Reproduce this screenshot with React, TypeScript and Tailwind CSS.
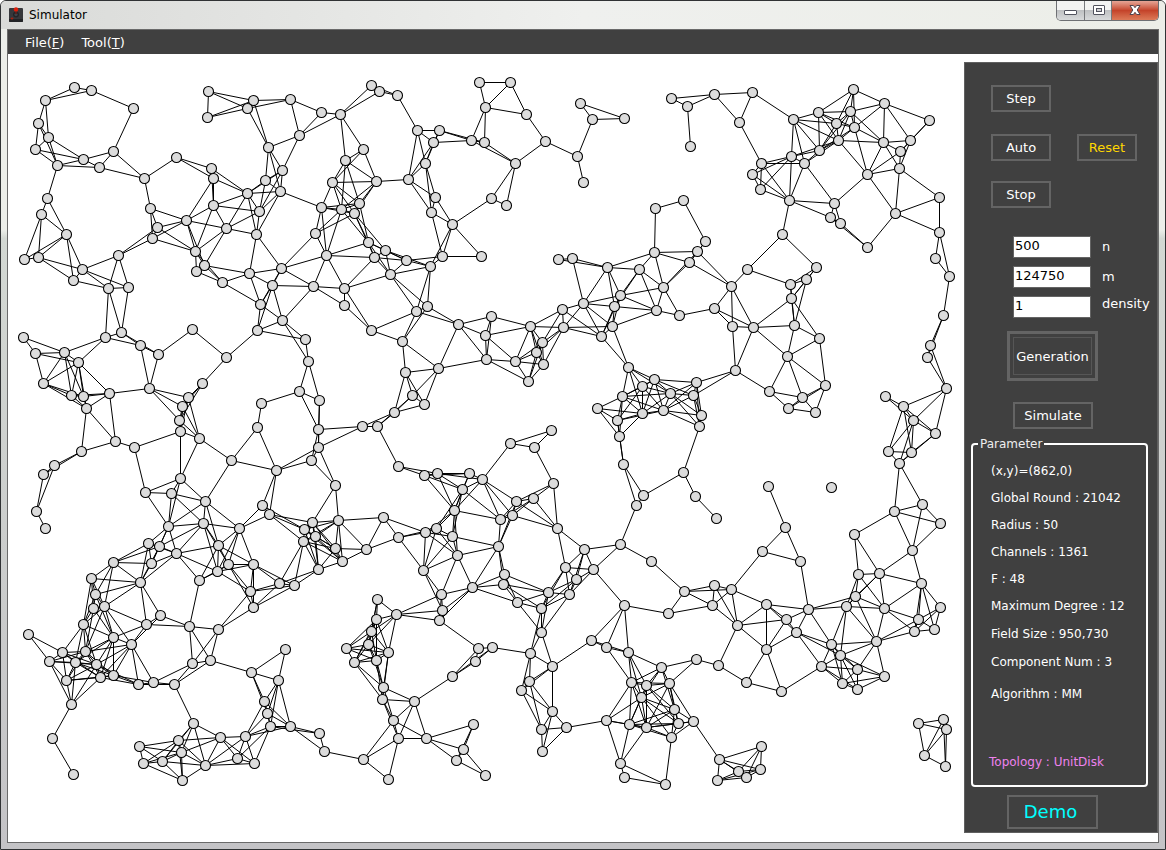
import React from "react";

const RADIUS = 50;

const NODES: [number, number][] = [
  [74, 87], [91, 90], [45, 100], [133, 108], [38, 123], [48, 137], [35, 149], [57, 165], [83, 159], [99, 167],
  [113, 151], [144, 178], [176, 157], [211, 168], [213, 178], [47, 198], [41, 214], [66, 234], [24, 259], [38, 257],
  [118, 255], [82, 269], [73, 280], [108, 288], [128, 287], [150, 208], [157, 227], [152, 238], [186, 220], [213, 205],
  [226, 228], [195, 251], [204, 265], [196, 271], [222, 282], [208, 91], [207, 117], [253, 100], [247, 108], [290, 99],
  [268, 147], [299, 135], [282, 170], [265, 180], [280, 191], [247, 193], [259, 211], [256, 234], [249, 273], [281, 268],
  [272, 285], [260, 304], [313, 286], [315, 233], [371, 85], [379, 91], [397, 95], [340, 114], [321, 112], [417, 130],
  [439, 130], [433, 142], [471, 140], [484, 142], [485, 107], [479, 82], [510, 82], [526, 114], [545, 141], [580, 103],
  [592, 119], [624, 118], [577, 156], [583, 182], [515, 163], [491, 198], [506, 205], [363, 149], [345, 160], [332, 182],
  [376, 181], [408, 179], [425, 163], [435, 197], [431, 212], [452, 224], [359, 203], [354, 213], [341, 209], [321, 207],
  [368, 242], [385, 250], [374, 257], [406, 260], [390, 274], [430, 266], [442, 256], [481, 256], [326, 255], [344, 288],
  [344, 305], [416, 311], [427, 306], [558, 259], [572, 258], [607, 267], [639, 269], [620, 295], [583, 303], [614, 306],
  [562, 309], [671, 98], [687, 106], [714, 94], [752, 92], [739, 122], [690, 146], [793, 119], [818, 112], [853, 89],
  [850, 111], [836, 123], [854, 127], [838, 140], [819, 150], [884, 103], [929, 120], [883, 142], [910, 140], [900, 151],
  [899, 168], [867, 174], [791, 156], [804, 163], [761, 163], [752, 174], [760, 189], [789, 200], [834, 203], [830, 217],
  [840, 223], [867, 247], [895, 213], [939, 197], [939, 232], [935, 258], [949, 276], [782, 234], [816, 267], [806, 279],
  [790, 284], [791, 298], [747, 269], [731, 286], [714, 308], [655, 208], [683, 200], [705, 241], [697, 251], [689, 262],
  [654, 252], [663, 287], [656, 310], [23, 337], [35, 353], [64, 352], [78, 362], [43, 383], [71, 395], [83, 396],
  [86, 408], [109, 393], [105, 337], [121, 332], [140, 345], [158, 354], [192, 329], [226, 357], [149, 388], [202, 383],
  [188, 397], [182, 406], [179, 420], [180, 431], [199, 438], [115, 441], [134, 447], [81, 451], [54, 465], [43, 474],
  [36, 511], [45, 528], [145, 492], [180, 478], [171, 493], [205, 501], [168, 526], [203, 523], [148, 543], [159, 546],
  [176, 553], [218, 545], [239, 528], [231, 460], [261, 403], [257, 427], [257, 330], [282, 320], [305, 339], [308, 361],
  [299, 391], [319, 400], [318, 429], [318, 447], [311, 460], [276, 470], [262, 505], [269, 514], [312, 522], [304, 529],
  [315, 536], [303, 541], [371, 330], [402, 341], [458, 324], [491, 316], [485, 335], [486, 359], [438, 368], [405, 372],
  [412, 395], [424, 404], [394, 412], [362, 426], [377, 426], [398, 466], [335, 485], [338, 520], [383, 517], [398, 537],
  [530, 326], [515, 361], [536, 352], [542, 342], [543, 364], [528, 381], [563, 327], [612, 326], [601, 336], [628, 367],
  [622, 396], [597, 408], [617, 420], [619, 436], [623, 464], [510, 443], [534, 447], [551, 430], [424, 475], [437, 473],
  [469, 473], [482, 479], [462, 489], [454, 510], [425, 532], [436, 528], [452, 536], [500, 519], [512, 515], [516, 501],
  [533, 498], [553, 483], [557, 528], [498, 546], [620, 544], [636, 505], [643, 495], [584, 549], [335, 548], [366, 549],
  [679, 315], [732, 326], [753, 327], [794, 325], [819, 338], [787, 356], [735, 370], [696, 382], [693, 395], [654, 379],
  [642, 386], [670, 393], [663, 410], [642, 413], [701, 415], [699, 426], [769, 391], [802, 397], [788, 408], [815, 412],
  [825, 385], [683, 472], [695, 496], [716, 518], [768, 486], [831, 487], [785, 527], [762, 551], [943, 315], [930, 345],
  [927, 357], [946, 388], [885, 396], [903, 406], [913, 420], [935, 433], [888, 451], [911, 452], [899, 463], [922, 504],
  [894, 511], [940, 523], [854, 534], [912, 550], [113, 562], [151, 563], [140, 582], [91, 578], [95, 594], [93, 608],
  [104, 606], [83, 624], [113, 637], [131, 644], [146, 624], [160, 615], [85, 651], [62, 652], [28, 634], [49, 661],
  [75, 662], [96, 664], [100, 677], [113, 675], [66, 680], [71, 704], [52, 738], [73, 774], [138, 684], [153, 682],
  [174, 684], [192, 663], [210, 660], [189, 626], [218, 629], [199, 580], [217, 571], [228, 564], [253, 564], [250, 591],
  [253, 607], [279, 583], [294, 585], [318, 569], [251, 672], [285, 649], [278, 680], [264, 701], [267, 713], [270, 726],
  [290, 726], [319, 733], [193, 723], [178, 740], [181, 752], [220, 737], [245, 736], [139, 746], [143, 763], [162, 761],
  [205, 765], [237, 758], [254, 763], [182, 780], [342, 561], [423, 570], [457, 555], [472, 587], [441, 594], [442, 610],
  [439, 620], [396, 614], [377, 599], [376, 619], [371, 631], [368, 644], [346, 648], [354, 662], [376, 660], [388, 652],
  [383, 687], [382, 699], [393, 720], [398, 738], [414, 701], [426, 738], [363, 759], [388, 779], [324, 751], [452, 676],
  [475, 661], [478, 648], [492, 647], [473, 724], [463, 749], [456, 760], [485, 775], [504, 574], [503, 584], [517, 602],
  [548, 592], [541, 608], [565, 567], [593, 569], [576, 579], [569, 594], [541, 632], [530, 653], [552, 666], [529, 681],
  [521, 690], [552, 711], [541, 729], [566, 727], [542, 751], [591, 640], [606, 647], [628, 652], [624, 605], [631, 682],
  [606, 720], [629, 724], [620, 763], [624, 777], [641, 697], [651, 561], [668, 613], [684, 591], [714, 585], [731, 589],
  [712, 605], [737, 625], [766, 604], [786, 619], [796, 632], [808, 609], [800, 561], [766, 649], [746, 682], [781, 691],
  [718, 665], [696, 659], [661, 667], [646, 685], [669, 683], [674, 709], [678, 723], [693, 721], [671, 737], [646, 727],
  [665, 784], [719, 759], [761, 746], [760, 769], [738, 771], [746, 777], [717, 780], [858, 574], [879, 573], [855, 596],
  [846, 606], [884, 608], [921, 583], [940, 607], [918, 619], [914, 631], [934, 629], [831, 644], [840, 655], [821, 666],
  [857, 669], [842, 683], [857, 689], [884, 676], [876, 641], [918, 723], [943, 719], [946, 729], [924, 755], [945, 766],
];

// Unit disk topology: two nodes share a channel when they lie within RADIUS.
const CHANNELS = NODES.flatMap(([ax, ay], i) =>
  NODES.slice(i + 1)
    .filter(([bx, by]) => Math.hypot(ax - bx, ay - by) <= RADIUS)
    .map(([bx, by]) => `M${ax} ${ay}L${bx} ${by}`),
).join("");

function Field() {
  return (
    <svg viewBox="7.5 53.5 956 788" className="block h-auto w-full" role="img" aria-label="Network topology">
      <path d={CHANNELS} stroke="#000" strokeWidth="1" fill="none" />
      {NODES.map(([x, y], i) => (
        <circle key={i} cx={x} cy={y} r="5" fill="#dcdcdc" stroke="#000" strokeWidth="1.1" />
      ))}
    </svg>
  );
}

function AppIcon() {
  return (
    <svg width="16" height="16" viewBox="0 0 16 16" aria-hidden="true">
      <rect x="1" y="1" width="14" height="14" rx="1" fill="#36373b" />
      <path d="M1 12h14v2a1 1 0 0 1-1 1H2a1 1 0 0 1-1-1z" fill="#222326" />
      <circle cx="8" cy="7.5" r="3" fill="#232428" />
      <circle cx="8" cy="7.5" r="1.6" fill="#3f4248" />
      <rect x="7" y="3" width="2" height="4" fill="#55211f" />
      <circle cx="8" cy="2.4" r="2.2" fill="#dc1e0a" />
      <ellipse cx="4" cy="11.4" rx="1.4" ry="1" fill="#a8200f" />
    </svg>
  );
}

function TitleBar() {
  const button = "flex h-full items-center justify-center border-[#77797c]";
  return (
    <header className="flex h-7 items-start bg-linear-to-r from-[#d9dad8] via-[#eff0ee] to-[#eceee8]">
      <div className="flex h-7 flex-1 items-center gap-[5px] pl-[7px]">
        <AppIcon />
        <h1 className="text-xs text-black">Simulator</h1>
      </div>
      <div className="mr-[6px] flex h-5 overflow-hidden rounded-b-[5px] border border-t-0 border-[#6e7074]">
        <button
          aria-label="Minimize"
          className={`${button} w-7 border-r bg-linear-to-b from-[#f2f3f2] from-45% via-[#bfc1c3] via-50% to-[#d8dadb]`}
        >
          <svg width="13" height="13" viewBox="0 0 13 13" aria-hidden="true">
            <rect x="0.5" y="6.5" width="12" height="4" rx="0.5" fill="#fff" stroke="#51535e" />
          </svg>
        </button>
        <button
          aria-label="Maximize"
          className={`${button} w-[27px] border-r bg-linear-to-b from-[#f2f3f2] from-45% via-[#bfc1c3] via-50% to-[#d8dadb]`}
        >
          <svg width="13" height="13" viewBox="0 0 13 13" aria-hidden="true">
            <rect x="1.5" y="1.5" width="11" height="9" rx="0.5" fill="#fff" stroke="#51535e" />
            <rect x="4.5" y="4.5" width="5" height="3" fill="#d0d1d4" stroke="#51535e" />
          </svg>
        </button>
        <button
          aria-label="Close"
          className="flex h-full w-[46px] items-center justify-center bg-linear-to-b from-[#e5a596] from-0% via-[#c4432a] via-50% to-[#dc7a58]"
        >
          <svg width="14" height="13" viewBox="0 0 14 13" aria-hidden="true">
            <path
              d="M2 1.5h3.4L7 3.7l1.6-2.2H12L9.2 6 12 10.5H8.6L7 8.3l-1.6 2.2H2L4.8 6z"
              fill="#fff"
              stroke="#51434b"
            />
          </svg>
        </button>
      </div>
    </header>
  );
}

const BUTTON = "h-[27px] border-2 border-[#646464] leading-none";

function CountField({ id, label, value, labelClass }: { id: string; label: string; value: string; labelClass?: string }) {
  return (
    <div className="flex h-[22px] items-center gap-[11px]">
      <input
        id={id}
        defaultValue={value}
        className="h-[22px] w-[78px] border border-[#646464] bg-white pb-[3px] pl-px text-[13px] text-black outline-none"
      />
      <label htmlFor={id} className={labelClass}>
        {label}
      </label>
    </div>
  );
}

function Parameters() {
  return (
    <fieldset className="mt-[7px] mr-[9px] ml-[6px] h-[351px] rounded-[4px] border-2 border-white text-xs">
      <legend className="ml-[5px] px-[2px] text-[#eee]">Parameter</legend>
      <div className="flex flex-col pt-[5px] pl-4 whitespace-nowrap">
        <div className="flex flex-col pl-[2px]">
          <div className="flex h-[27px] items-center">(x,y)=(862,0)</div>
          <div className="flex h-[27px] items-center">Global Round : 21042</div>
          <div className="flex h-[27px] items-center">Radius : 50</div>
          <div className="flex h-[27px] items-center">Channels : 1361</div>
          <div className="flex h-[27px] items-center">F : 48</div>
          <div className="flex h-[28px] items-center">Maximum Degree : 12</div>
          <div className="flex h-[28px] items-center">Field Size : 950,730</div>
          <div className="flex h-[28px] items-center">Component Num : 3</div>
          <div className="mt-1 flex h-[27px] items-center">Algorithm : MM</div>
        </div>
        <div className="mt-[41px] flex h-[27px] items-center text-[#ee82ee]">Topology : UnitDisk</div>
      </div>
    </fieldset>
  );
}

function ControlPanel() {
  return (
    <aside className="mt-2 mb-[9px] w-[194px] shrink-0 border border-[#606060] bg-[#404040] pt-[22px] pb-[3px] text-[13px] text-white">
      <div className="flex flex-col pl-[26px]">
        <button className={`${BUTTON} w-[60px]`}>Step</button>
        <div className="mt-[22px] flex gap-[26px]">
          <button className={`${BUTTON} w-[60px]`}>Auto</button>
          <button className={`${BUTTON} w-[60px] text-[#ffd700]`}>Reset</button>
        </div>
        <button className={`${BUTTON} mt-5 w-[60px]`}>Stop</button>
      </div>
      <div className="mt-7 flex flex-col gap-2 pl-12">
        <CountField id="n" label="n" value="500" />
        <CountField id="m" label="m" value="124750" />
        <CountField id="density" label="density" value="1" labelClass="pb-1.5" />
      </div>
      <div className="mt-[13px] flex flex-col pl-[42px]">
        <button className="h-[50px] w-[91px] border-3 border-[#646464] p-[3px] leading-none">
          <span className="flex h-full items-center justify-center border border-[#565656]">Generation</span>
        </button>
        <button className={`${BUTTON} mt-[21px] ml-[6px] w-20`}>Simulate</button>
      </div>
      <Parameters />
      <button className="mt-2 ml-[42px] block h-[34px] w-[91px] border-2 border-[#646464] pr-1 text-lg leading-none text-[#00ffff]">
        Demo
      </button>
    </aside>
  );
}

export default function App() {
  return (
    <div className="flex min-h-screen flex-col overflow-hidden rounded-t-md border border-[#303234] bg-linear-to-b from-[#eceee9] from-27% via-[#d3d8d3] via-28% to-[#c4c3c6] font-['DejaVu_Sans','Noto_Sans',sans-serif]">
      <TitleBar />
      <div className="mx-[6px] mb-[6px] flex flex-1 flex-col border border-[#6a6a6a] bg-white">
        <nav className="flex h-6 items-center gap-[17px] bg-[#404040] pt-px pl-[17px] text-[13px] text-white">
          <a href="#file">
            File(<u>F</u>)
          </a>
          <a href="#tool">
            Tool(<u>T</u>)
          </a>
        </nav>
        <main className="flex flex-1 items-start">
          <div className="min-w-0 flex-1">
            <Field />
          </div>
          <ControlPanel />
        </main>
      </div>
    </div>
  );
}
